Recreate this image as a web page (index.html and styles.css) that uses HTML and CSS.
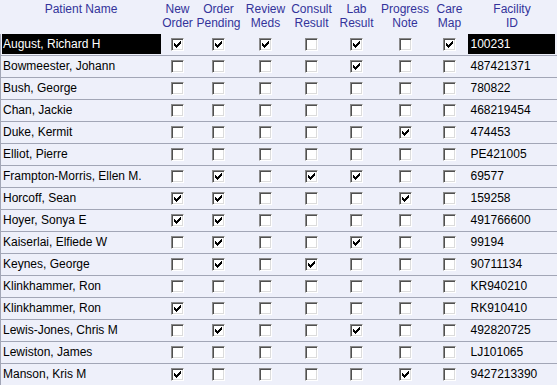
FILE: index.html
```html
<!DOCTYPE html>
<html>
<head>
<meta charset="utf-8">
<title>Patients</title>
<link rel="stylesheet" href="styles.css">
</head>
<body>
<svg class="defs" width="0" height="0">
  <symbol id="chk" viewBox="0 0 11 11">
    <path shape-rendering="crispEdges" d="M8 2h1v1h-1z M7 3h2v1h-2z M2 4h1v1h-1z M6 4h3v1h-3z M2 5h2v1h-2z M5 5h3v1h-3z M2 6h5v1h-5z M3 7h3v1h-3z M4 8h1v1h-1z"/>
  </symbol>
</svg>
<table class="grid">
  <colgroup>
    <col class="c-name"><col class="c-new"><col class="c-pend"><col class="c-rev"><col class="c-cons"><col class="c-lab"><col class="c-prog"><col class="c-care"><col class="c-fac">
  </colgroup>
  <thead>
    <tr>
      <th>Patient Name</th>
      <th>New<br>Order</th>
      <th>Order<br>Pending</th>
      <th>Review<br>Meds</th>
      <th>Consult<br>Result</th>
      <th>Lab<br>Result</th>
      <th>Progress<br>Note</th>
      <th>Care<br>Map</th>
      <th>Facility<br>ID</th>
    </tr>
  </thead>
  <tbody>
    <tr>
      <td class="name sel"><div class="in">August, Richard H</div></td>
      <td><span class="cb"><svg class="ck"><use href="#chk"/></svg></span></td>
      <td><span class="cb"><svg class="ck"><use href="#chk"/></svg></span></td>
      <td><span class="cb"><svg class="ck"><use href="#chk"/></svg></span></td>
      <td><span class="cb"></span></td>
      <td><span class="cb"><svg class="ck"><use href="#chk"/></svg></span></td>
      <td><span class="cb"></span></td>
      <td><span class="cb"><svg class="ck"><use href="#chk"/></svg></span></td>
      <td class="fac sel"><div class="in">100231</div></td>
    </tr>
    <tr>
      <td class="name"><div class="in">Bowmeester, Johann</div></td>
      <td><span class="cb"></span></td>
      <td><span class="cb"></span></td>
      <td><span class="cb"></span></td>
      <td><span class="cb"></span></td>
      <td><span class="cb"><svg class="ck"><use href="#chk"/></svg></span></td>
      <td><span class="cb"></span></td>
      <td><span class="cb"></span></td>
      <td class="fac"><div class="in">487421371</div></td>
    </tr>
    <tr>
      <td class="name"><div class="in">Bush, George</div></td>
      <td><span class="cb"></span></td>
      <td><span class="cb"></span></td>
      <td><span class="cb"></span></td>
      <td><span class="cb"></span></td>
      <td><span class="cb"></span></td>
      <td><span class="cb"></span></td>
      <td><span class="cb"></span></td>
      <td class="fac"><div class="in">780822</div></td>
    </tr>
    <tr>
      <td class="name"><div class="in">Chan, Jackie</div></td>
      <td><span class="cb"></span></td>
      <td><span class="cb"></span></td>
      <td><span class="cb"></span></td>
      <td><span class="cb"></span></td>
      <td><span class="cb"></span></td>
      <td><span class="cb"></span></td>
      <td><span class="cb"></span></td>
      <td class="fac"><div class="in">468219454</div></td>
    </tr>
    <tr>
      <td class="name"><div class="in">Duke, Kermit</div></td>
      <td><span class="cb"></span></td>
      <td><span class="cb"></span></td>
      <td><span class="cb"></span></td>
      <td><span class="cb"></span></td>
      <td><span class="cb"></span></td>
      <td><span class="cb"><svg class="ck"><use href="#chk"/></svg></span></td>
      <td><span class="cb"></span></td>
      <td class="fac"><div class="in">474453</div></td>
    </tr>
    <tr>
      <td class="name"><div class="in">Elliot, Pierre</div></td>
      <td><span class="cb"></span></td>
      <td><span class="cb"></span></td>
      <td><span class="cb"></span></td>
      <td><span class="cb"></span></td>
      <td><span class="cb"></span></td>
      <td><span class="cb"></span></td>
      <td><span class="cb"></span></td>
      <td class="fac"><div class="in">PE421005</div></td>
    </tr>
    <tr>
      <td class="name"><div class="in">Frampton-Morris, Ellen M.</div></td>
      <td><span class="cb"></span></td>
      <td><span class="cb"><svg class="ck"><use href="#chk"/></svg></span></td>
      <td><span class="cb"></span></td>
      <td><span class="cb"><svg class="ck"><use href="#chk"/></svg></span></td>
      <td><span class="cb"><svg class="ck"><use href="#chk"/></svg></span></td>
      <td><span class="cb"></span></td>
      <td><span class="cb"></span></td>
      <td class="fac"><div class="in">69577</div></td>
    </tr>
    <tr>
      <td class="name"><div class="in">Horcoff, Sean</div></td>
      <td><span class="cb"><svg class="ck"><use href="#chk"/></svg></span></td>
      <td><span class="cb"><svg class="ck"><use href="#chk"/></svg></span></td>
      <td><span class="cb"></span></td>
      <td><span class="cb"></span></td>
      <td><span class="cb"></span></td>
      <td><span class="cb"><svg class="ck"><use href="#chk"/></svg></span></td>
      <td><span class="cb"></span></td>
      <td class="fac"><div class="in">159258</div></td>
    </tr>
    <tr>
      <td class="name"><div class="in">Hoyer, Sonya E</div></td>
      <td><span class="cb"><svg class="ck"><use href="#chk"/></svg></span></td>
      <td><span class="cb"><svg class="ck"><use href="#chk"/></svg></span></td>
      <td><span class="cb"></span></td>
      <td><span class="cb"></span></td>
      <td><span class="cb"></span></td>
      <td><span class="cb"></span></td>
      <td><span class="cb"></span></td>
      <td class="fac"><div class="in">491766600</div></td>
    </tr>
    <tr>
      <td class="name"><div class="in">Kaiserlai, Elfiede W</div></td>
      <td><span class="cb"></span></td>
      <td><span class="cb"><svg class="ck"><use href="#chk"/></svg></span></td>
      <td><span class="cb"></span></td>
      <td><span class="cb"></span></td>
      <td><span class="cb"><svg class="ck"><use href="#chk"/></svg></span></td>
      <td><span class="cb"></span></td>
      <td><span class="cb"></span></td>
      <td class="fac"><div class="in">99194</div></td>
    </tr>
    <tr>
      <td class="name"><div class="in">Keynes, George</div></td>
      <td><span class="cb"></span></td>
      <td><span class="cb"><svg class="ck"><use href="#chk"/></svg></span></td>
      <td><span class="cb"></span></td>
      <td><span class="cb"><svg class="ck"><use href="#chk"/></svg></span></td>
      <td><span class="cb"></span></td>
      <td><span class="cb"></span></td>
      <td><span class="cb"></span></td>
      <td class="fac"><div class="in">90711134</div></td>
    </tr>
    <tr>
      <td class="name"><div class="in">Klinkhammer, Ron</div></td>
      <td><span class="cb"></span></td>
      <td><span class="cb"></span></td>
      <td><span class="cb"></span></td>
      <td><span class="cb"></span></td>
      <td><span class="cb"></span></td>
      <td><span class="cb"></span></td>
      <td><span class="cb"></span></td>
      <td class="fac"><div class="in">KR940210</div></td>
    </tr>
    <tr>
      <td class="name"><div class="in">Klinkhammer, Ron</div></td>
      <td><span class="cb"><svg class="ck"><use href="#chk"/></svg></span></td>
      <td><span class="cb"></span></td>
      <td><span class="cb"></span></td>
      <td><span class="cb"></span></td>
      <td><span class="cb"></span></td>
      <td><span class="cb"></span></td>
      <td><span class="cb"></span></td>
      <td class="fac"><div class="in">RK910410</div></td>
    </tr>
    <tr>
      <td class="name"><div class="in">Lewis-Jones, Chris M</div></td>
      <td><span class="cb"></span></td>
      <td><span class="cb"><svg class="ck"><use href="#chk"/></svg></span></td>
      <td><span class="cb"></span></td>
      <td><span class="cb"></span></td>
      <td><span class="cb"><svg class="ck"><use href="#chk"/></svg></span></td>
      <td><span class="cb"></span></td>
      <td><span class="cb"></span></td>
      <td class="fac"><div class="in">492820725</div></td>
    </tr>
    <tr>
      <td class="name"><div class="in">Lewiston, James</div></td>
      <td><span class="cb"></span></td>
      <td><span class="cb"></span></td>
      <td><span class="cb"></span></td>
      <td><span class="cb"></span></td>
      <td><span class="cb"></span></td>
      <td><span class="cb"></span></td>
      <td><span class="cb"></span></td>
      <td class="fac"><div class="in">LJ101065</div></td>
    </tr>
    <tr>
      <td class="name"><div class="in">Manson, Kris M</div></td>
      <td><span class="cb"><svg class="ck"><use href="#chk"/></svg></span></td>
      <td><span class="cb"></span></td>
      <td><span class="cb"></span></td>
      <td><span class="cb"></span></td>
      <td><span class="cb"></span></td>
      <td><span class="cb"><svg class="ck"><use href="#chk"/></svg></span></td>
      <td><span class="cb"></span></td>
      <td class="fac"><div class="in">9427213390</div></td>
    </tr>
  </tbody>
</table>
</body>
</html>
```
FILE: styles.css
```css
html, body {
  margin: 0;
  padding: 0;
  background: #eef0fa;
}
body {
  font-family: "Liberation Sans", Arial, sans-serif;
  font-size: 12px;
  color: #000;
  overflow: hidden;
}
.defs {
  position: absolute;
  width: 0;
  height: 0;
}
.grid {
  border-collapse: collapse;
  table-layout: fixed;
  width: 557px;
}
.c-name { width: 161px; }
.c-new { width: 32px; }
.c-pend { width: 50px; }
.c-rev { width: 44px; }
.c-cons { width: 48px; }
.c-lab { width: 42px; }
.c-prog { width: 55px; }
.c-care { width: 34px; }
.c-fac { width: 91px; }

.grid th {
  font-weight: normal;
  color: #33339a;
  text-align: center;
  vertical-align: top;
  line-height: 14px;
  padding: 2px 0 4px 0;
  height: 28px;
  white-space: nowrap;
}
.grid td {
  padding: 0 1px 1px 1px;
  border-bottom: 1px solid #a2a6b6;
  height: 20px;
  text-align: center;
  vertical-align: middle;
}
.grid td.name {
  border-left: 1px solid #a2a6b6;
  text-align: left;
}
.grid td.fac {
  text-align: left;
  padding-right: 3px;
}
.in {
  height: 20px;
  line-height: 20px;
  padding-left: 1px;
  white-space: nowrap;
  overflow: hidden;
}
.fac .in {
  padding-left: 3px;
}
.sel .in {
  background: #000;
  color: #fff;
}
.cb {
  display: inline-block;
  box-sizing: border-box;
  width: 13px;
  height: 13px;
  vertical-align: middle;
  background: #fff;
  border: 1px solid;
  border-color: #8a8a8a #ffffff #ffffff #8a8a8a;
  box-shadow: inset 1px 1px 0 #505050, inset -1px -1px 0 #dcdcdc;
  position: relative;
}
.ck {
  display: block;
  width: 11px;
  height: 11px;
  fill: #000;
}
```
